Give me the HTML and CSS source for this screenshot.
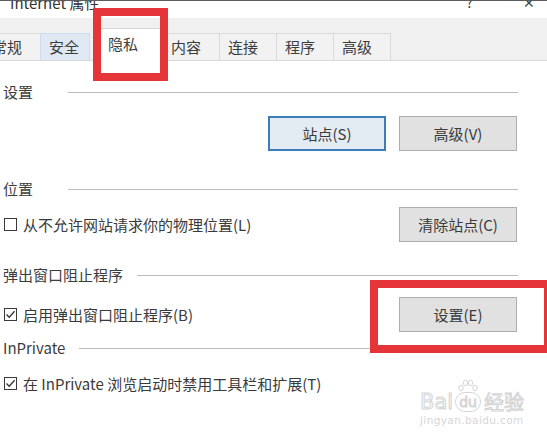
FILE: index.html
```html
<!DOCTYPE html>
<html lang="zh-CN">
<head>
    <meta charset="UTF-8">
    <meta name="viewport" content="width=device-width, initial-scale=1.0">
    <title>Internet 属性</title>
    <link rel="stylesheet" href="styles.css">
</head>
<body>
    <div class="window">
        <div class="titlebar">
            <span class="title">Internet 属性</span>
            <span class="tb-btn help">?</span>
            <span class="tb-btn close">✕</span>
        </div>

        <div class="tabstrip">
            <div class="tab first">常规</div>
            <div class="tab hover">安全</div>
            <div class="tab selected">隐私</div>
            <div class="tab after-sel">内容</div>
            <div class="tab">连接</div>
            <div class="tab">程序</div>
            <div class="tab">高级</div>
        </div>

        <div class="panel">
            <div class="legend-row sec-settings">
                <span class="legend">设置</span>
                <span class="rule"></span>
            </div>
            <div class="btn-row first-btns">
                <button class="btn focus">站点(S)</button>
                <button class="btn">高级(V)</button>
            </div>

            <div class="legend-row sec-location">
                <span class="legend">位置</span>
                <span class="rule"></span>
            </div>
            <div class="opt-row row-location">
                <label class="check">
                    <span class="box"></span>
                    <span>从不允许网站请求你的物理位置(L)</span>
                </label>
                <button class="btn">清除站点(C)</button>
            </div>

            <div class="legend-row sec-popup">
                <span class="legend">弹出窗口阻止程序</span>
                <span class="rule"></span>
            </div>
            <div class="opt-row row-popup">
                <label class="check">
                    <span class="box">
                        <svg width="11" height="11" viewBox="0 0 11 11"><polyline points="1.5,5.5 4.2,8.3 9.6,2.2" fill="none" stroke="#333" stroke-width="1.3"/></svg>
                    </span>
                    <span>启用弹出窗口阻止程序(B)</span>
                </label>
                <button class="btn">设置(E)</button>
            </div>

            <div class="legend-row sec-private">
                <span class="legend">InPrivate</span>
                <span class="rule"></span>
            </div>
            <div class="opt-row row-private">
                <label class="check">
                    <span class="box">
                        <svg width="11" height="11" viewBox="0 0 11 11"><polyline points="1.5,5.5 4.2,8.3 9.6,2.2" fill="none" stroke="#333" stroke-width="1.3"/></svg>
                    </span>
                    <span>在 InPrivate 浏览启动时禁用工具栏和扩展(T)</span>
                </label>
            </div>
        </div>

        <!-- annotation boxes from the tutorial -->
        <div class="mark mark-tab"></div>
        <div class="mark mark-btn"></div>

        <div class="watermark">
            <div class="wm-logo">
                <span>Bai</span>
                <span class="wm-du">
                    <svg class="paw" width="22" height="14" viewBox="0 0 22 14">
                        <ellipse cx="4" cy="9" rx="2.2" ry="2.8" fill="none" stroke="#d6d6d6"/>
                        <ellipse cx="8.5" cy="4" rx="2.2" ry="2.8" fill="none" stroke="#d6d6d6"/>
                        <ellipse cx="13.5" cy="4" rx="2.2" ry="2.8" fill="none" stroke="#d6d6d6"/>
                        <ellipse cx="18" cy="9" rx="2.2" ry="2.8" fill="none" stroke="#d6d6d6"/>
                    </svg>
                    du
                </span>
                <span class="wm-cn">经验</span>
            </div>
            <div class="wm-url">jingyan.baidu.com</div>
        </div>
    </div>
</body>
</html>
```

FILE: styles.css
```css
body {
    margin: 0;
    background: #ffffff;
    font-family: "Noto Sans CJK SC", "Noto Sans", sans-serif;
    font-size: 15px;
    color: #3a3a3a;
}
.window {
    position: relative;
    width: 547px;
    height: 438px;
    overflow: hidden;
    background: #ffffff;
}

/* title bar, cut off at the top of the shot */
.titlebar {
    height: 17px;
    border-top: 1px solid #5c5c5c;
    display: flex;
    align-items: flex-start;
    overflow: hidden;
    background: #ffffff;
}
.title {
    margin-left: 10px;
    line-height: 3px;
    font-size: 15px;
    color: #333;
}
.tb-btn {
    line-height: 3px;
    font-size: 14px;
    color: #444;
}
.help {
    margin-left: auto;
}
.close {
    margin-left: 50px;
    margin-right: 12px;
}

/* tabs */
.tabstrip {
    height: 42px;
    background: #f0f0f0;
    display: flex;
    align-items: flex-end;
}
.tab {
    height: 26px;
    line-height: 26px;
    padding: 0 18px 0 8px;
    border: 1px solid #dadada;
    border-bottom: none;
    margin-right: -1px;
    background: #f2f2f2;
    color: #3c3c3c;
    white-space: nowrap;
}
.tab.first {
    margin-left: -17px;
}
.tab.hover {
    background: #dfe9f3;
    border-color: #cfdceb;
    padding-right: 10px;
}
.tab.selected {
    position: relative;
    z-index: 1;
    height: 32px;
    line-height: 30px;
    margin: 0 0 -1px 5px;
    padding: 0 26px 0 13px;
    background: #ffffff;
    border-color: #d6d6d6;
}
.tab.after-sel {
    margin-left: -3px;
}

/* page */
.panel {
    border-top: 1px solid #d9d9d9;
    padding: 0 29px 0 3px;
    display: flex;
    flex-direction: column;
}
.legend-row {
    height: 20px;
    display: flex;
    align-items: center;
}
.legend {
    min-width: 51px;
    padding-right: 14px;
    white-space: nowrap;
    color: #3c3c3c;
}
.rule {
    flex: 1;
    height: 1px;
    margin-top: 2px;
    background: #bdbdbd;
}
.sec-settings { margin-top: 20px; }
.first-btns { margin-top: 15px; }
.sec-location { margin-top: 27px; }
.row-location { margin-top: 9px; }
.sec-popup { margin-top: 22px; }
.row-popup { margin-top: 13px; }
.sec-private { margin-top: 5px; }
.row-private { margin-top: 16px; height: 20px; }

.btn-row {
    display: flex;
    justify-content: flex-end;
    gap: 13px;
}
.opt-row {
    display: flex;
    align-items: center;
    justify-content: space-between;
}
.btn {
    width: 118px;
    height: 35px;
    font-family: inherit;
    font-size: 15px;
    color: #3a3a3a;
    background: #e1e1e1;
    border: 1px solid #adadad;
    border-radius: 0;
    padding: 0;
    margin-right: 1px;
}
.btn.focus {
    background: #e3ebf3;
    border: 2px solid #3b7db8;
    margin-right: 0;
}
.check {
    display: flex;
    align-items: center;
    gap: 6px;
    white-space: nowrap;
}
.box {
    width: 11px;
    height: 11px;
    margin-left: 1px;
    border: 1px solid #3a3a3a;
    background: #fff;
    display: flex;
}

/* red tutorial frames */
.mark {
    position: absolute;
    border: 8px solid #e63538;
    box-sizing: border-box;
    z-index: 5;
}
.mark-tab {
    left: 93px;
    top: 8px;
    width: 75px;
    height: 73px;
}
.mark-btn {
    left: 370px;
    top: 280px;
    width: 182px;
    height: 73px;
}

/* site watermark */
.watermark {
    position: absolute;
    left: 420px;
    top: 391px;
    color: #ffffff;
}
.wm-logo {
    display: flex;
    align-items: flex-end;
    font-family: "DejaVu Sans", sans-serif;
    font-size: 21px;
    line-height: 22px;
    -webkit-text-stroke: 1px #d4d4d4;
}
.wm-du {
    position: relative;
    margin-left: 2px;
    font-size: 14px;
    line-height: 18px;
    padding: 0 3px;
    border: 1px solid #d6d6d6;
    border-radius: 10px;
    margin-bottom: 1px;
}
.paw {
    position: absolute;
    left: 1px;
    top: -14px;
}
.wm-cn {
    margin-left: 3px;
    font-family: "Noto Sans CJK SC", sans-serif;
    font-size: 20px;
}
.wm-url {
    font-family: "DejaVu Sans", sans-serif;
    font-size: 10.5px;
    line-height: 13px;
    color: #d6d6d6;
    margin-top: 1px;
    letter-spacing: 0.4px;
}
```
